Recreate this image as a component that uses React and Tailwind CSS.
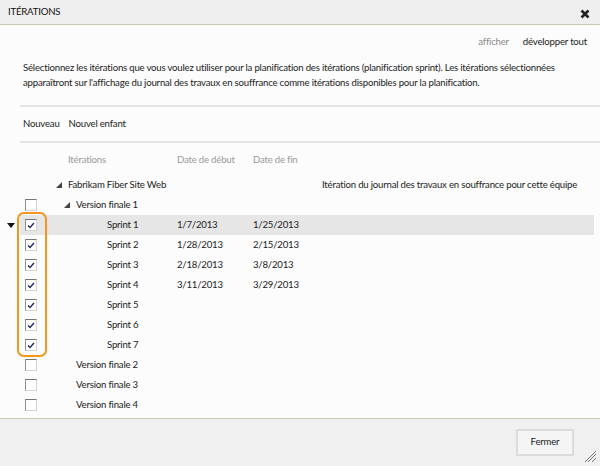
const rows = [
  { kind: "root", name: "Fabrikam Fiber Site Web", note: "Itération du journal des travaux en souffrance pour cette équipe" },
  { kind: "release", name: "Version finale 1", box: true, checked: false, open: true },
  { kind: "sprint", name: "Sprint 1", start: "1/7/2013", end: "1/25/2013", box: true, checked: true, selected: true },
  { kind: "sprint", name: "Sprint 2", start: "1/28/2013", end: "2/15/2013", box: true, checked: true },
  { kind: "sprint", name: "Sprint 3", start: "2/18/2013", end: "3/8/2013", box: true, checked: true },
  { kind: "sprint", name: "Sprint 4", start: "3/11/2013", end: "3/29/2013", box: true, checked: true },
  { kind: "sprint", name: "Sprint 5", box: true, checked: true },
  { kind: "sprint", name: "Sprint 6", box: true, checked: true },
  { kind: "sprint", name: "Sprint 7", box: true, checked: true },
  { kind: "leaf", name: "Version finale 2", box: true, checked: false },
  { kind: "leaf", name: "Version finale 3", box: true, checked: false },
  { kind: "leaf", name: "Version finale 4", box: true, checked: false },
];

function Checkbox({ checked }) {
  return (
    <div className="w-[12px] h-[12px] bg-white border border-t-[#767676] border-l-[#8f8f8f] border-r-[#d4d4d4] border-b-[#d4d4d4] flex items-center justify-center">
      {checked && (
        <svg width="8" height="7" viewBox="0 0 8 7">
          <path d="M1 3.5 L3 5.5 L7 1" fill="none" stroke="#1d2a5c" strokeWidth="1.4" />
        </svg>
      )}
    </div>
  );
}

function Tri() {
  return (
    <svg width="6" height="6" viewBox="0 0 6 6" className="mr-[6px] shrink-0">
      <path d="M6 0 L6 6 L0 6 Z" fill="#444" />
    </svg>
  );
}

function Row({ row }) {
  let name;
  if (row.kind === "root") {
    name = (
      <div className="flex items-center pl-[10px]">
        <Tri />
        <span>{row.name}</span>
      </div>
    );
  } else if (row.kind === "release") {
    name = (
      <div className="flex items-center pl-[18px]">
        <Tri />
        <span>{row.name}</span>
      </div>
    );
  } else if (row.kind === "sprint") {
    name = <span className="pl-[61px]">{row.name}</span>;
  } else {
    name = <span className="pl-[30px]">{row.name}</span>;
  }
  return (
    <div className="flex h-[20px] items-center">
      <div className="w-[20px] shrink-0 flex justify-center pl-[2px]">
        {row.selected && (
          <svg width="8" height="5" viewBox="0 0 8 5">
            <path d="M0 0 L8 0 L4 5 Z" fill="#111" />
          </svg>
        )}
      </div>
      <div className={`flex-1 mr-[6px] h-full flex items-center whitespace-nowrap ${row.selected ? "bg-[#e6e6e6]" : ""}`}>
        <div className="w-[26px] shrink-0 pl-[5px] flex items-center">{row.box && <Checkbox checked={row.checked} />}</div>
        <div className="w-[131px] shrink-0">{name}</div>
        <div className="w-[76px] shrink-0">{row.start}</div>
        <div className="w-[69px] shrink-0">{row.end}</div>
        <div className="flex-1">{row.note}</div>
      </div>
    </div>
  );
}

export default function App() {
  return (
    <div
      className="w-[600px] h-[466px] flex flex-col bg-[#fcfcfc] text-[#222] text-[9.6px] tracking-[-0.2px] overflow-hidden"
      style={{ fontFamily: 'Lato, "Open Sans", sans-serif' }}
    >
      <div className="h-[25px] shrink-0 bg-[#efefef] border-b border-[#c9c9b4] flex items-center justify-between pl-[8px] pr-[10px]">
        <span className="text-[#111]">ITÉRATIONS</span>
        <svg width="10" height="10" viewBox="0 0 10 10" className="mt-[4px]">
          <path d="M1.5 1.5 L8.5 8.5 M8.5 1.5 L1.5 8.5" stroke="#222" strokeWidth="2.6" />
        </svg>
      </div>

      <div className="flex-1 flex flex-col">
        <div className="flex justify-end gap-[14px] pr-[13px] pt-[10px] h-[35px]">
          <span className="text-[#8a8a8a]">afficher</span>
          <span>développer tout</span>
        </div>
        <p className="pl-[23px] pr-[8px] leading-[15px]">
          Sélectionnez les itérations que vous voulez utiliser pour la planification des itérations (planification sprint). Les itérations sélectionnées apparaîtront sur l'affichage du journal des travaux en souffrance comme itérations disponibles pour la planification.
        </p>
        <div className="ml-[20px] mt-[15px] h-[2px] bg-[#e4e4e4]" />
        <div className="flex gap-[9px] pl-[23px] h-[34px] items-center">
          <span>Nouveau</span>
          <span>Nouvel enfant</span>
        </div>
        <div className="ml-[20px] h-[2px] bg-[#e4e4e4]" />

        <div className="flex h-[26px] items-center pt-[9px] text-[#9a9a9a]">
          <div className="w-[68px]" />
          <div className="w-[109px]">Itérations</div>
          <div className="w-[76px]">Date de début</div>
          <div>Date de fin</div>
        </div>

        <div className="relative mt-[6px]">
          {rows.map((r, i) => (
            <Row key={i} row={r} />
          ))}
          <div className="absolute left-[17px] top-[37px] w-[30px] h-[145px] border-2 border-[#f7941d] rounded-[7px] pointer-events-none" />
        </div>
      </div>

      <div className="h-[48px] shrink-0 bg-[#f0f0f0] border-t border-[#c9c9b4] flex items-start justify-end relative">
        <button className="mt-[10px] mr-[26px] w-[58px] h-[27px] bg-[#f5f5f5] border-2 border-[#dcdcdc] text-[#222]">
          Fermer
        </button>
        <svg width="12" height="12" viewBox="0 0 12 12" className="absolute right-[3px] bottom-[3px]">
          <path d="M11 3 L3 11 M11 7 L7 11 M11 0 L0 11" stroke="#555" strokeWidth="0.8" />
        </svg>
      </div>
    </div>
  );
}
